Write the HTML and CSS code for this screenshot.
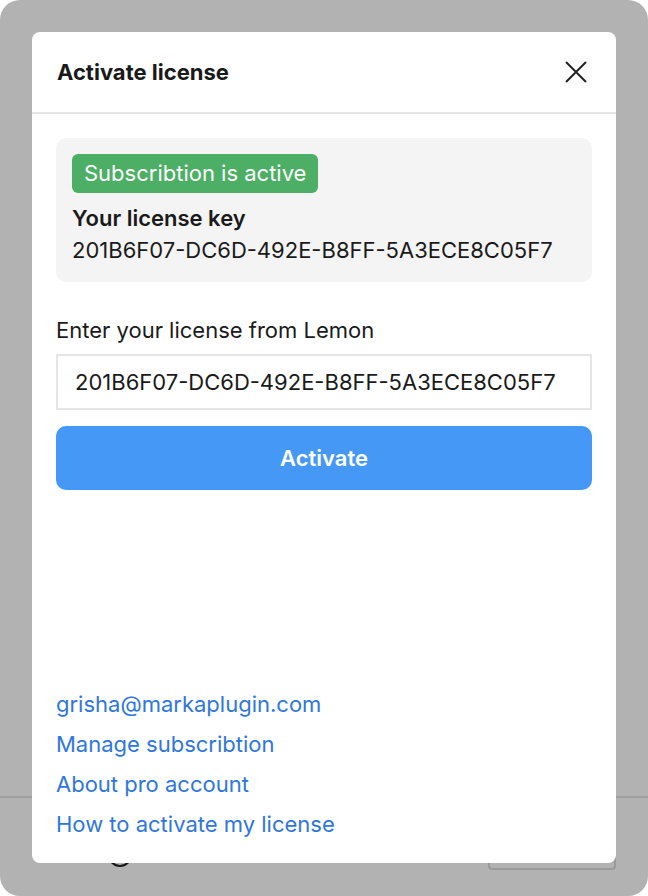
FILE: index.html
```html
<!DOCTYPE html>
<html lang="en">
  <head>
    <meta charset="UTF-8" />
    <meta name="viewport" content="width=device-width, initial-scale=1.0" />
    <title>Activate license</title>
    <link rel="stylesheet" href="styles.css">
  </head>
  <body>
    <div class="app">
      <!-- App behind the dialog -->
      <div class="app-main"></div>
      <div class="app-footer">
        <span class="footer-icon"></span>
        <span class="footer-button"></span>
      </div>

      <!-- Dialog -->
      <div class="overlay">
        <div class="modal">
          <div class="modal-header">
            <h2>Activate license</h2>
            <button class="close" type="button" aria-label="Close">
              <svg width="24" height="24" viewBox="0 0 24 24">
                <path d="M2 2 L22 22 M22 2 L2 22" stroke="#222" stroke-width="2" fill="none" />
              </svg>
            </button>
          </div>

          <div class="modal-body">
            <div class="status-card">
              <span class="badge">Subscribtion is active</span>
              <div class="key-title">Your license key</div>
              <div class="key-value">201B6F07-DC6D-492E-B8FF-5A3ECE8C05F7</div>
            </div>

            <label class="field-label" for="licenseInput">Enter your license from Lemon</label>
            <input id="licenseInput" class="license-input" type="text" value="201B6F07-DC6D-492E-B8FF-5A3ECE8C05F7" />
            <button class="activate" type="button">Activate</button>

            <div class="links">
              <a href="#">grisha@markaplugin.com</a>
              <a href="#">Manage subscribtion</a>
              <a href="#">About pro account</a>
              <a href="#">How to activate my license</a>
            </div>
          </div>
        </div>
      </div>
    </div>
  </body>
</html>
```

FILE: styles.css
```css
/* Global Reset */
* {
  margin: 0;
  padding: 0;
  box-sizing: border-box;
}

body {
  font-family: Inter, "Noto Sans", sans-serif;
  background-color: #fff;
  color: #1a1a1a;
  height: 100vh;
  overflow: hidden;
}

/* App window behind the dialog */
.app {
  position: relative;
  width: 648px;
  height: 896px;
  border-radius: 20px;
  overflow: hidden;
  background-color: #fff;
  display: flex;
  flex-direction: column;
}

.app-main {
  height: 798px;
  border-bottom: 2px solid #e2e2e2;
}

.app-footer {
  flex: 1;
  display: flex;
  justify-content: space-between;
  align-items: center;
  padding: 0 32px 0 108px;
}

.footer-icon {
  width: 24px;
  height: 24px;
  margin-top: 16px;
  border: 2px solid #222;
  border-radius: 50%;
}

.footer-button {
  width: 128px;
  height: 36px;
  margin-top: 10px;
  border: 2px solid #ddd;
  border-radius: 4px;
}

/* Overlay */
.overlay {
  position: absolute;
  inset: 0;
  background-color: rgba(0, 0, 0, 0.3);
  padding: 32px 32px 33px;
  display: flex;
}

/* Modal */
.modal {
  flex: 1;
  background-color: #fff;
  border-radius: 8px;
  display: flex;
  flex-direction: column;
}

.modal-header {
  height: 82px;
  padding: 0 28px 0 25px;
  display: flex;
  align-items: center;
  justify-content: space-between;
  border-bottom: 2px solid #e6e6e6;
}

.modal-header h2 {
  font-size: 22px;
  font-weight: 700;
  color: #1a1a1a;
}

.close {
  background: none;
  border: none;
  width: 24px;
  height: 24px;
  cursor: pointer;
}

.close svg {
  display: block;
}

.modal-body {
  flex: 1;
  padding: 24px 24px 19px;
  display: flex;
  flex-direction: column;
}

/* Status card */
.status-card {
  background-color: #f4f4f4;
  border-radius: 10px;
  padding: 16px;
  display: flex;
  flex-direction: column;
  align-items: flex-start;
}

.badge {
  background-color: #4caf65;
  color: #fff;
  font-size: 22px;
  line-height: 27px;
  padding: 6px 12px;
  border-radius: 6px;
  margin-bottom: 9px;
}

.key-title {
  font-size: 22px;
  font-weight: 600;
  line-height: 32px;
}

.key-value {
  font-size: 22px;
  line-height: 32px;
}

/* Form */
.field-label {
  font-size: 22px;
  line-height: 32px;
  margin-top: 32px;
  margin-bottom: 8px;
}

.license-input {
  height: 56px;
  padding: 0 17px;
  border: 2px solid #e6e6e6;
  font-family: inherit;
  font-size: 22px;
  color: #1a1a1a;
  outline: none;
}

.activate {
  margin-top: 16px;
  height: 64px;
  border: none;
  border-radius: 10px;
  background-color: #4598f5;
  color: #fff;
  font-family: inherit;
  font-size: 22px;
  font-weight: 600;
  cursor: pointer;
}

/* Links */
.links {
  margin-top: auto;
  display: flex;
  flex-direction: column;
}

.links a {
  color: #2f76de;
  font-size: 22px;
  line-height: 40px;
  text-decoration: none;
}
```
